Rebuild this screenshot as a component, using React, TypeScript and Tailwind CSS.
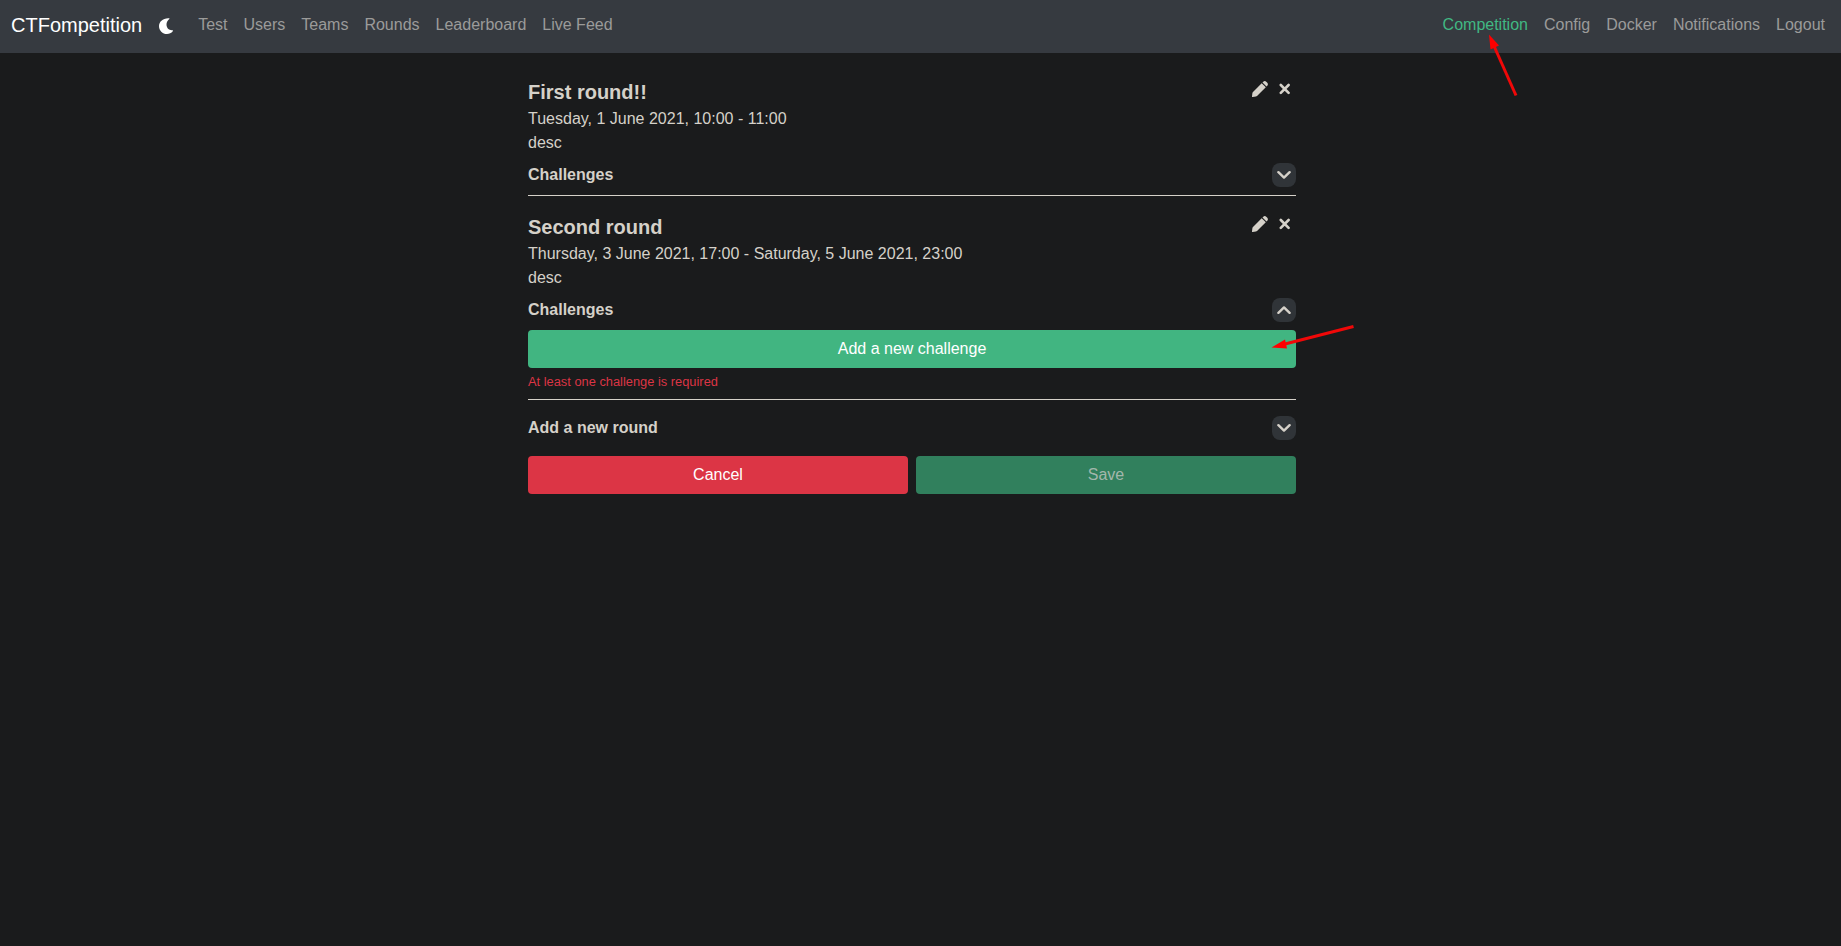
const leftLinks = ["Test", "Users", "Teams", "Rounds", "Leaderboard", "Live Feed"];
const rightLinks = ["Config", "Docker", "Notifications", "Logout"];

function Moon() {
  return (
    <svg className="mt-[18px] mr-6 ml-4 shrink-0" width="16" height="16" viewBox="0 0 16 16" fill="#fff">
      <path d="M10.700 0.200C11.600 0.200 11.700 0.700 11 1.300C9.300 2.800 8.500 4.500 8.500 6.600C8.500 10.200 11 12.500 14.300 12.300C15 12.300 15.200 12.700 14.800 13.200C13.300 15 11.300 16 9 16C4.500 16 1 12.500 1 8.200C1 3.800 4.800 0 10.700 0.200Z" />
    </svg>
  );
}

function Pencil() {
  return (
    <svg width="16" height="16" viewBox="0 0 16 16" fill="currentColor">
      <path d="M9.700 2.200 13.800 6.300 5 15C4.700 15.300 4.300 15.500 3.900 15.600L0.600 16C0.200 16.100-0.100 15.800 0 15.400L0.400 12.100C0.500 11.700 0.700 11.300 1 11Z" />
      <path d="M10.500 1.500 11.300 0.700C12.100-0.100 13.400-0.100 14.200 0.700L15.300 1.800C16.100 2.600 16.100 3.900 15.300 4.700L14.500 5.500Z" />
    </svg>
  );
}

function Cross() {
  return (
    <svg className="mr-[5px]" width="12" height="12" viewBox="0 0 12 12" stroke="currentColor" strokeWidth="2.600" strokeLinecap="round">
      <path d="M1.800 2 9.600 9.800M9.600 2 1.800 9.800" />
    </svg>
  );
}

function Toggle({ open = false }: { open?: boolean }) {
  return (
    <button className="flex size-6 items-center justify-center rounded-lg bg-[#303438]">
      <svg width="14" height="10" viewBox="0 0 14 10" fill="none" stroke="currentColor" strokeWidth="2.400" strokeLinecap="round" strokeLinejoin="round">
        <path d={open ? "M1.400 7.800 7 2.400 12.600 7.800" : "M1.400 2.200 7 7.600 12.600 2.200"} />
      </svg>
    </button>
  );
}

function Row({ title, open }: { title: string; open?: boolean }) {
  return (
    <div className="flex h-6 items-center justify-between">
      <h6 className="font-bold">{title}</h6>
      <Toggle open={open} />
    </div>
  );
}

function RoundHeader({ title, time }: { title: string; time: string }) {
  return (
    <>
      <div className="flex justify-between">
        <h5 className="text-xl leading-[30px] font-bold">{title}</h5>
        <div className="flex h-6 items-center gap-[11px]">
          <Pencil />
          <Cross />
        </div>
      </div>
      <p>{time}</p>
      <p className="mb-2">desc</p>
    </>
  );
}

export default function App() {
  return (
    <div className="relative min-h-screen bg-[#1a1b1c] font-['Liberation_Sans',Arial,sans-serif] text-base leading-6 text-[#d5d1c9]">
      <nav className="flex h-[53px] items-start justify-between bg-[#363a40] pr-4 pl-[11px] text-[#9b9b9a]">
        <div className="flex">
          <span className="mt-2.5 text-xl leading-[30px] text-white">CTFompetition</span>
          <Moon />
          <div className="mt-[13px] flex gap-4">
            {leftLinks.map((l) => (
              <a key={l}>{l}</a>
            ))}
          </div>
        </div>
        <div className="mt-[13px] flex gap-4">
          <a className="text-[#41b883]">Competition</a>
          {rightLinks.map((l) => (
            <a key={l}>{l}</a>
          ))}
        </div>
      </nav>

      <main className="pt-6 pr-[17px]">
        <div className="mx-auto w-[768px]">
          <section className="border-b border-[#d5d1c9] pb-2">
            <RoundHeader title="First round!!" time="Tuesday, 1 June 2021, 10:00 - 11:00" />
            <Row title="Challenges" />
          </section>
          <section className="mt-4 border-b border-[#d5d1c9] pb-2">
            <RoundHeader title="Second round" time="Thursday, 3 June 2021, 17:00 - Saturday, 5 June 2021, 23:00" />
            <Row title="Challenges" open />
            <button className="mt-2 h-[38px] w-full rounded bg-[#41b581] text-white">Add a new challenge</button>
            <p className="mt-1 h-[19px] text-[12.85px] leading-[19px] text-[#dc3545]">At least one challenge is required</p>
          </section>
          <div className="mt-4">
            <Row title="Add a new round" />
          </div>
          <div className="mt-4 grid grid-cols-2 gap-2">
            <button className="h-[38px] rounded bg-[#dc3545] text-white">Cancel</button>
            <button className="h-[38px] rounded bg-[#31805d] text-[#a3b7ac]">Save</button>
          </div>
        </div>
      </main>

      <svg className="pointer-events-none absolute top-0 left-0" width="1841" height="400" aria-hidden="true">
        <g stroke="#f00808" strokeWidth="3">
          <path d="M1516 95.500 1494 46" />
          <path d="M1353.500 326.500 1285 344" />
        </g>
        <path d="M1489 34.500 1499 45.500 1490.500 49.500Z" fill="#ff0000" />
        <path d="M1271.500 347.500 1285 339.500 1287 348.500Z" fill="#ff0000" />
      </svg>
    </div>
  );
}
